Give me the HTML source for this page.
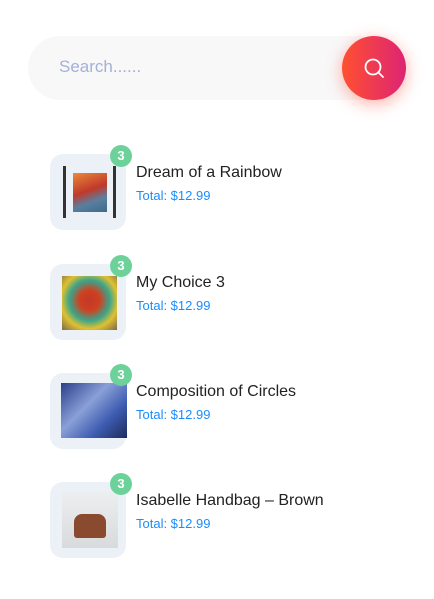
<!DOCTYPE html>
<html><head><style>
body{margin:0;width:434px;height:599px;background:#fff;font-family:"Liberation Sans",sans-serif;position:relative;overflow:hidden}
.search{position:absolute;left:28px;top:36px;width:360px;height:64px;border-radius:32px;background:#f8f8f9}
.search span{position:absolute;left:31px;top:21px;font-size:17px;color:#a3b1d6}
.btn{position:absolute;left:342px;top:36px;width:64px;height:64px;border-radius:50%;background:linear-gradient(90deg,#ff5030,#dd2474);box-shadow:0 4px 16px rgba(255,80,60,.45)}
.item{position:absolute;left:50px;width:360px;height:80px}
.thumb{position:absolute;left:0;top:0;width:76px;height:76px;border-radius:13px;background:#ecf0f7}
.badge{position:absolute;left:60px;top:-9px;width:22px;height:22px;border-radius:50%;background:#6dd29a;color:#fff;font-size:13px;font-weight:bold;text-align:center;line-height:22px}
.t{position:absolute;left:86px;top:10px;font-size:16px;color:#222}
.p{position:absolute;left:86px;top:34px;font-size:13px;color:#1a8cff}
.img{position:absolute}
</style></head><body>
<div class="search"><span>Search......</span></div>
<div class="btn"><svg width="64" height="64" viewBox="0 0 64 64"><circle cx="31" cy="31" r="7.5" fill="none" stroke="#fff" stroke-width="1.8"/><line x1="36.5" y1="36.5" x2="41" y2="41" stroke="#fff" stroke-width="1.8" stroke-linecap="round"/></svg></div>

<div class="item" style="top:154px"><div class="thumb">
<div class="img" style="left:13px;top:12px;width:3px;height:52px;background:#333"></div>
<div class="img" style="left:63px;top:12px;width:3px;height:52px;background:#333"></div>
<div class="img" style="left:23px;top:19px;width:34px;height:39px;background:linear-gradient(160deg,#e98a3a,#c0392b 45%,#5a7fa0 70%,#3d6a88)"></div>
</div><div class="badge">3</div><div class="t">Dream of a Rainbow</div><div class="p">Total: $12.99</div></div>

<div class="item" style="top:264px"><div class="thumb">
<div class="img" style="left:12px;top:12px;width:55px;height:54px;background:radial-gradient(circle at 50% 45%,#c0392b 0,#d04020 25%,#3aa58a 50%,#e0c030 70%,#7a6a50 100%)"></div>
</div><div class="badge">3</div><div class="t">My Choice 3</div><div class="p">Total: $12.99</div></div>

<div class="item" style="top:373px"><div class="thumb">
<div class="img" style="left:11px;top:10px;width:66px;height:55px;background:linear-gradient(135deg,#2a3f8a,#8aa0d8 40%,#3d5bb0 70%,#1e2a5a)"></div>
</div><div class="badge">3</div><div class="t">Composition of Circles</div><div class="p">Total: $12.99</div></div>

<div class="item" style="top:482px"><div class="thumb">
<div class="img" style="left:12px;top:10px;width:56px;height:56px;background:linear-gradient(#eceef0,#d8dadc)"></div>
<div class="img" style="left:24px;top:32px;width:32px;height:24px;border-radius:8px 8px 3px 3px;background:#8a4a30"></div>
</div><div class="badge">3</div><div class="t">Isabelle Handbag – Brown</div><div class="p">Total: $12.99</div></div>
</body></html>
